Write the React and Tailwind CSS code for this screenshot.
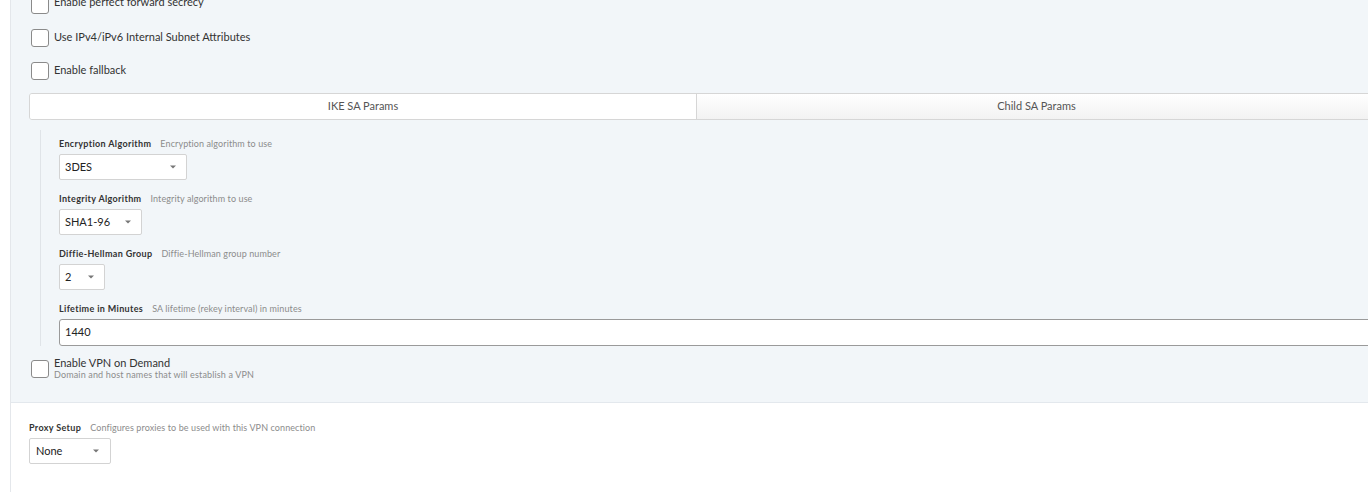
import React from "react";

const font = { fontFamily: "Lato, 'Open Sans', sans-serif" };

function Caret() {
  return (
    <svg width="6" height="4" viewBox="0 0 6 4" className="shrink-0">
      <path d="M0 0.5 L6 0.5 L3 3.5 Z" fill="#777" />
    </svg>
  );
}

function Check({ children, className = "" }) {
  return (
    <div className={"flex items-start " + className}>
      <div className="w-[18px] h-[18px] shrink-0 rounded-[3px] border border-[#8a8a8a] bg-white" />
      <div className="ml-[5px]">{children}</div>
    </div>
  );
}

function Select({ value, w }) {
  return (
    <div
      className={
        "h-[26px] flex items-center justify-between pl-[5px] pr-[10px] bg-white border border-[#d3d3d3] rounded-[2px] text-[11px] text-[#222] " +
        w
      }
    >
      <span>{value}</span>
      <Caret />
    </div>
  );
}

function Label({ title, desc, className = "" }) {
  return (
    <div className={"flex items-center h-[12px] leading-[12px] " + className}>
      <span className="text-[9px] font-bold text-[#333] tracking-[0.35px]">{title}</span>
      <span className="ml-[9px] text-[9px] text-[#8c8c8c] tracking-[0.1px]">{desc}</span>
    </div>
  );
}

export default function App() {
  return (
    <div className="w-[1368px] h-[492px] overflow-hidden bg-white flex" style={font}>
      <div className="w-[10px] shrink-0" />
      <div className="flex-1 border-l border-[#e4e7eb] overflow-hidden">
        <div className="w-[1420px] bg-[#f2f6f9] border-b border-[#e3e8ed] pl-[20px] pb-[21px]">
          <div className="mt-[-4px] flex flex-col gap-[15px]">
            <Check>
              <div className="text-[11px] text-[#333] leading-[14px] mt-[-1px]">Enable perfect forward secrecy</div>
            </Check>
            <Check>
              <div className="text-[11px] text-[#333] leading-[14px] mt-[1px]">Use IPv4/iPv6 Internal Subnet Attributes</div>
            </Check>
            <Check>
              <div className="text-[11px] text-[#333] leading-[14px] mt-[1px]">Enable fallback</div>
            </Check>
          </div>
          <div className="ml-[-2px] mt-[13px] h-[27px] flex border border-[#d6d6d6] rounded-l-[3px] overflow-hidden">
            <div className="w-[667px] bg-white flex items-center justify-center text-[11px] text-[#555] border-r border-[#d6d6d6]">
              IKE SA Params
            </div>
            <div className="flex-1 bg-gradient-to-b from-white to-[#f2f2f2] flex items-center justify-center text-[11px] text-[#555]">
              <span className="mr-[54px]">Child SA Params</span>
            </div>
          </div>
          <div className="ml-[9px] mt-[10px] border-l border-[#e0e4e8] pl-[18px] pt-[8px]">
            <Label title="Encryption Algorithm" desc="Encryption algorithm to use" />
            <div className="mt-[4px]">
              <Select value="3DES" w="w-[128px]" />
            </div>
            <Label className="mt-[13px]" title="Integrity Algorithm" desc="Integrity algorithm to use" />
            <div className="mt-[4px]">
              <Select value="SHA1-96" w="w-[83px]" />
            </div>
            <Label className="mt-[13px]" title="Diffie-Hellman Group" desc="Diffie-Hellman group number" />
            <div className="mt-[4px]">
              <Select value="2" w="w-[46px]" />
            </div>
            <Label className="mt-[13px]" title="Lifetime in Minutes" desc="SA lifetime (rekey interval) in minutes" />
            <div className="mt-[4px] h-[27px] flex items-center pl-[5px] bg-white border border-[#9a9a9a] rounded-l-[3px] text-[11px] text-[#222]">
              1440
            </div>
          </div>
          <Check className="mt-[14px]">
            <div className="text-[11px] text-[#333] leading-[13px] mt-[-4px]">Enable VPN on Demand</div>
            <div className="text-[9px] text-[#8c8c8c] leading-[12px] tracking-[0.15px]">Domain and host names that will establish a VPN</div>
          </Check>
        </div>
        <div className="pl-[18px] pt-[19px]">
          <Label title="Proxy Setup" desc="Configures proxies to be used with this VPN connection" />
          <div className="mt-[4px]">
            <div className="w-[82px] h-[26px] flex items-center justify-between pl-[6px] pr-[11px] bg-white border border-[#d3d3d3] rounded-[2px] text-[11px] text-[#222]">
              <span>None</span>
              <Caret />
            </div>
          </div>
        </div>
      </div>
    </div>
  );
}
